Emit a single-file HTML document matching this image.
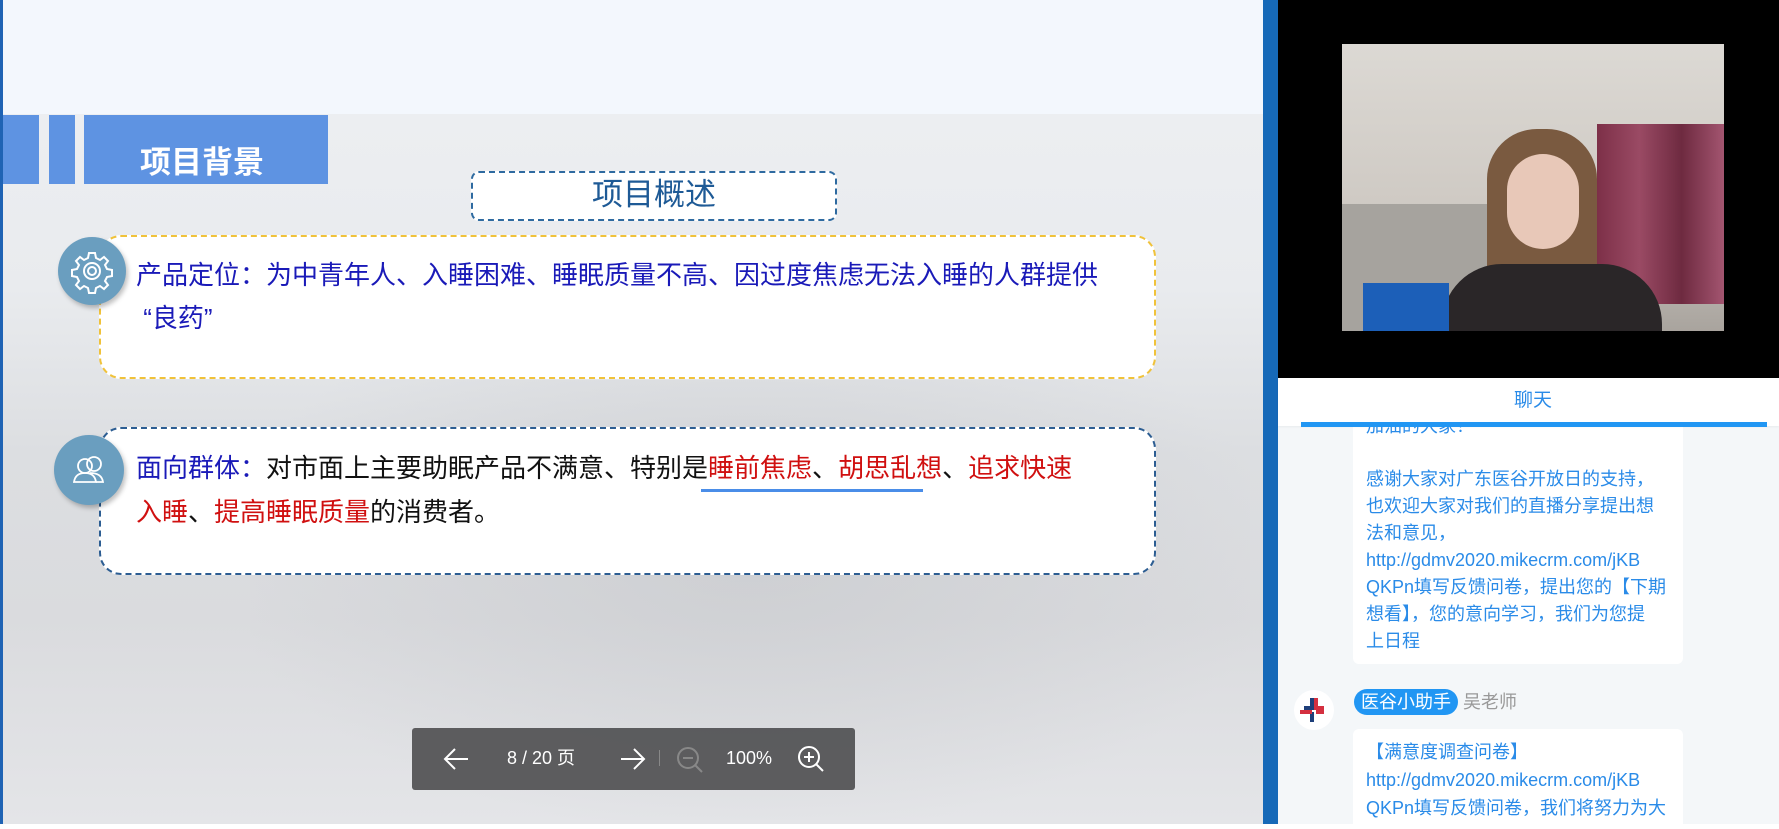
<!DOCTYPE html>
<html><head><meta charset="utf-8"><style>
*{margin:0;padding:0;box-sizing:border-box}
body{width:1779px;height:824px;overflow:hidden;position:relative;font-family:"Liberation Sans","Noto Sans CJK SC",sans-serif;background:#fff}
.abs{position:absolute}
#slide{left:0;top:0;width:1263px;height:824px;background:linear-gradient(180deg,#eef0f3 0%,#e9ebee 35%,#dcdee1 55%,#dadbde 75%,#e4e5e8 100%);overflow:hidden}
.cn{font-family:"Liberation Sans","Noto Sans CJK SC",sans-serif}
</style></head><body>
<div id="slide" class="abs">
  <div class="abs" style="left:0;top:0;width:1263px;height:114px;background:#f3f7fd"></div>
  <div class="abs" style="left:250px;top:380px;width:1000px;height:440px;background:radial-gradient(ellipse at 50% 40%,rgba(195,197,201,.55),rgba(210,212,216,0) 75%);"></div>
  <div class="abs" style="left:0;top:0;width:3px;height:824px;background:#1f63b4"></div>
  <div class="abs" style="left:3px;top:115px;width:36px;height:69px;background:#5e93e2"></div>
  <div class="abs" style="left:49px;top:115px;width:26px;height:69px;background:#5e93e2"></div>
  <div class="abs" style="left:84px;top:115px;width:244px;height:69px;background:#5e93e2"></div>
  <div class="abs cn" style="left:140px;top:143px;font-size:31px;font-weight:bold;color:#fff;line-height:40px">项目背景</div>
  <div class="abs cn" style="left:471px;top:171px;width:366px;height:50px;border:2px dashed #2e6aa0;border-radius:8px;background:#fff;text-align:center;font-size:31px;line-height:44px;color:#1e5a96">项目概述</div>

  <div class="abs" style="left:99px;top:235px;width:1057px;height:144px;border:2px dashed #f0c23a;border-radius:22px;background:#fff"></div>
  <div class="abs cn" style="left:136px;top:254px;width:1010px;font-size:26px;line-height:43px;color:#1a1ab8">产品定位：为中青年人、入睡困难、睡眠质量不高、因过度焦虑无法入睡的人群提供<br>&nbsp;“良药”</div>
  <div class="abs" style="left:58px;top:237px;width:68px;height:68px;border-radius:50%;background:#6a9ebf;box-shadow:2px 3px 5px rgba(0,0,0,.25)">
    <svg width="68" height="68" viewBox="0 0 68 68"><g fill="none" stroke="#fff" stroke-width="2">
    <path d="M31 16h6l1 5 4 2 4-3 4 4-3 4 2 4 5 1v6l-5 1-2 4 3 4-4 4-4-3-4 2-1 5h-6l-1-5-4-2-4 3-4-4 3-4-2-4-5-1v-6l5-1 2-4-3-4 4-4 4 3 4-2z"/>
    <circle cx="34" cy="34" r="8"/><circle cx="34" cy="34" r="4"/></g></svg>
  </div>

  <div class="abs" style="left:99px;top:427px;width:1057px;height:148px;border:2px dashed #2c5d92;border-radius:22px;background:#fff"></div>
  <div class="abs cn" style="left:136px;top:446px;width:1010px;font-size:26px;line-height:44px;color:#111">
    <span style="color:#1a1ab8">面向群体：</span>对市面上主要助眠产品不满意、特别是<span style="color:#d01010">睡前焦虑</span>、<span style="color:#d01010">胡思乱想</span>、<span style="color:#d01010">追求快速</span><br><span style="color:#d01010">入睡</span>、<span style="color:#d01010">提高睡眠质量</span>的消费者。</div>
  <div class="abs" style="left:701px;top:489px;width:222px;height:3px;background:#4a8de8"></div>
  <div class="abs" style="left:54px;top:435px;width:70px;height:70px;border-radius:50%;background:#6a9ebf;box-shadow:2px 3px 5px rgba(0,0,0,.25)">
    <svg width="70" height="70" viewBox="0 0 70 70"><g fill="none" stroke="#fff" stroke-width="1.8">
    <circle cx="31" cy="31" r="7"/><circle cx="40" cy="29" r="7"/><path d="M20 47c1-7 6-9 11-9s10 2 11 9z"/><path d="M36 38c6 0 12 2 13 9h-7"/></g></svg>
  </div>

  <div class="abs" style="left:412px;top:728px;width:443px;height:62px;background:rgba(80,80,82,.92);border-radius:3px;color:#fff">
    <svg class="abs" style="left:30px;top:19px" width="28" height="24" viewBox="0 0 28 24"><path d="M26 12H3M13 2L3 12l10 10" fill="none" stroke="#fff" stroke-width="2"/></svg>
    <div class="abs cn" style="left:95px;top:17px;font-size:18px;line-height:26px">8 / 20 页</div>
    <svg class="abs" style="left:207px;top:19px" width="28" height="24" viewBox="0 0 28 24"><path d="M2 12h23M15 2l10 10-10 10" fill="none" stroke="#fff" stroke-width="2"/></svg>
    <div class="abs" style="left:247px;top:22px;width:1px;height:16px;background:#888"></div>
    <svg class="abs" style="left:263px;top:17px" width="30" height="30" viewBox="0 0 30 30"><circle cx="13" cy="13" r="10" fill="none" stroke="#888" stroke-width="2"/><path d="M8 13h10M20 20l7 7" stroke="#888" stroke-width="2"/></svg>
    <div class="abs" style="left:314px;top:17px;font-size:18px;line-height:26px">100%</div>
    <svg class="abs" style="left:384px;top:16px" width="30" height="30" viewBox="0 0 30 30"><circle cx="13" cy="13" r="10" fill="none" stroke="#fff" stroke-width="2"/><path d="M8 13h10M13 8v10M20 20l7 7" stroke="#fff" stroke-width="2"/></svg>
  </div>
</div>

<div class="abs" style="left:1263px;top:0;width:15px;height:824px;background:#1669b8"></div>
<div class="abs" style="left:1278px;top:0;width:501px;height:378px;background:#000"></div>
<div class="abs" style="left:1342px;top:44px;width:382px;height:287px;overflow:hidden;background:linear-gradient(180deg,#dcd9d4 0%,#cfcac4 55%,#a9a49e 100%)">
  <div class="abs" style="left:255px;top:80px;width:127px;height:180px;background:linear-gradient(90deg,#7d3048,#9a4a64,#6e2a40,#a35570)"></div>
  <div class="abs" style="left:0;top:160px;width:150px;height:127px;background:#a6a39e"></div>
  <div class="abs" style="left:145px;top:85px;width:110px;height:170px;border-radius:50px 50px 10px 10px;background:#7a5a40"></div>
  <div class="abs" style="left:165px;top:110px;width:72px;height:95px;border-radius:36px;background:#e8c8b8"></div>
  <div class="abs" style="left:100px;top:220px;width:220px;height:80px;border-radius:60px 60px 0 0;background:#2a2628"></div>
  <div class="abs" style="left:21px;top:239px;width:86px;height:48px;background:#1c5fb8"></div>
</div>

<div class="abs" style="left:1278px;top:378px;width:501px;height:446px;background:#f4f7f9"></div>
<div class="abs" style="left:1353px;top:400px;width:330px;height:264px;background:#fff;border-radius:0 0 6px 6px"></div>
<div class="abs cn" style="left:1366px;top:413px;width:320px;font-size:18px;line-height:27px;color:#2a8be8">加油的大家！</div>
<div class="abs" style="left:1278px;top:378px;width:501px;height:48px;background:#fff;box-shadow:0 1px 2px rgba(0,0,0,.05)"></div>
<div class="abs cn" style="left:1278px;top:386px;width:510px;text-align:center;font-size:19px;line-height:30px;color:#2a8be8">聊天</div>
<div class="abs" style="left:1301px;top:422px;width:466px;height:5px;background:#2196f3"></div>

<div class="abs cn" style="left:1366px;top:466px;width:320px;font-size:18px;line-height:27px;color:#2a8be8">感谢大家对广东医谷开放日的支持，<br>也欢迎大家对我们的直播分享提出想<br>法和意见，<br>http://gdmv2020.mikecrm.com/jKB<br>QKPn填写反馈问卷，提出您的【下期<br>想看】，您的意向学习，我们为您提<br>上日程</div>

<div class="abs" style="left:1294px;top:690px;width:40px;height:40px;border-radius:50%;background:#fff">
  <svg width="40" height="40" viewBox="0 0 40 40"><path d="M18 8v10H10M18 22v10" stroke="#1e3f7a" stroke-width="4" fill="none"/><path d="M22 8v10h8M22 22h8M6 22h12" stroke="#d43040" stroke-width="4" fill="none"/></svg>
</div>
<div class="abs cn" style="left:1354px;top:689px;width:104px;height:26px;border-radius:13px;background:#2196f3;color:#fff;font-size:18px;line-height:26px;text-align:center">医谷小助手</div>
<div class="abs cn" style="left:1463px;top:689px;font-size:18px;line-height:26px;color:#999">吴老师</div>

<div class="abs" style="left:1353px;top:729px;width:330px;height:100px;background:#fff;border-radius:6px"></div>
<div class="abs cn" style="left:1366px;top:738px;width:320px;font-size:18px;line-height:28px;color:#2a8be8">【满意度调查问卷】<br>http://gdmv2020.mikecrm.com/jKB<br>QKPn填写反馈问卷，我们将努力为大</div>
</body></html>
